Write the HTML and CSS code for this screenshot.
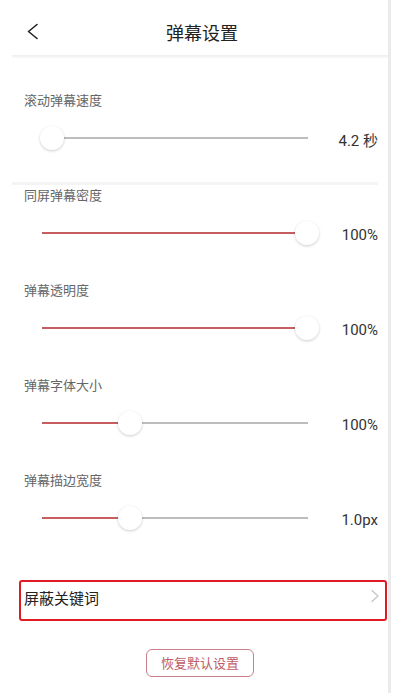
FILE: index.html
```html
<!DOCTYPE html>
<html lang="zh-CN">
<head>
<meta charset="utf-8">
<title>弹幕设置</title>
<link rel="stylesheet" href="styles.css">
</head>
<body>
<div class="app">
  <header class="header">
    <div class="back">
      <svg width="14" height="18" viewBox="0 0 14 18"><path d="M11 1.5 L2.5 8.5 L11 15.5" fill="none" stroke="#222" stroke-width="1.6" stroke-linecap="round" stroke-linejoin="round"/></svg>
    </div>
    <h1 class="title">弹幕设置</h1>
    <div></div>
  </header>
  <div class="header-band"></div>
  <main class="card">
    <section class="setting first">
      <div class="label">滚动弹幕速度</div>
      <div class="row">
        <div class="track"><div class="fill" style="width:10px"></div><div class="thumb" style="left:10px"></div></div>
        <div class="value">4.2 秒</div>
      </div>
      <div class="band"></div>
    </section>
    <section class="setting">
      <div class="label">同屏弹幕密度</div>
      <div class="row">
        <div class="track"><div class="fill" style="width:265px"></div><div class="thumb" style="left:265px"></div></div>
        <div class="value">100%</div>
      </div>
    </section>
    <section class="setting">
      <div class="label">弹幕透明度</div>
      <div class="row">
        <div class="track"><div class="fill" style="width:265px"></div><div class="thumb" style="left:265px"></div></div>
        <div class="value">100%</div>
      </div>
    </section>
    <section class="setting">
      <div class="label">弹幕字体大小</div>
      <div class="row">
        <div class="track"><div class="fill" style="width:88px"></div><div class="thumb" style="left:88px"></div></div>
        <div class="value">100%</div>
      </div>
    </section>
    <section class="setting">
      <div class="label">弹幕描边宽度</div>
      <div class="row">
        <div class="track"><div class="fill" style="width:88px"></div><div class="thumb" style="left:88px"></div></div>
        <div class="value">1.0px</div>
      </div>
    </section>
  </main>
  <div class="keyword">
    <span class="keyword-text">屏蔽关键词</span>
    <svg class="chev" width="10" height="14" viewBox="0 0 10 14"><path d="M2 1.5 L8 7 L2 12.5" fill="none" stroke="#c4c4c4" stroke-width="1.2" stroke-linecap="round" stroke-linejoin="round"/></svg>
  </div>
  <div class="reset-row">
    <button class="reset">恢复默认设置</button>
  </div>
</div>
</body>
</html>
```
FILE: styles.css
```css
html, body {
  margin: 0;
  padding: 0;
  background: #fff;
}
body {
  font-family: Roboto, "Noto Sans CJK SC", sans-serif;
  width: 400px;
  height: 693px;
  overflow: hidden;
}
.app {
  width: 388px;
  height: 693px;
  border-right: 3px solid #ebebeb;
  box-sizing: content-box;
}
.header {
  height: 55px;
  box-sizing: border-box;
  padding-top: 9px;
  display: grid;
  grid-template-columns: 62px 1fr 46px;
  align-items: center;
}
.back {
  padding-left: 26px;
  display: flex;
  align-items: center;
}
.title {
  margin: 0;
  text-align: center;
  font-family: "Noto Sans CJK SC", sans-serif;
  font-size: 18px;
  font-weight: 400;
  color: #222;
  line-height: 24px;
}
.header-band {
  height: 3px;
  margin-left: 12px;
  background: linear-gradient(#efefef, #f9f9f9);
}
.card {
  display: flow-root;
  padding-top: 32px;
}
.setting {
  margin-bottom: 32px;
}
.setting.first {
  margin-bottom: 0;
}
.band {
  height: 3px;
  margin: 29px 0 0 12px;
  width: 366px;
  background: #f4f4f4;
}
.label {
  padding-left: 24px;
  font-family: "Noto Sans CJK SC", sans-serif;
  font-size: 13px;
  line-height: 20px;
  color: #666;
}
.row {
  margin-top: 13px;
  height: 30px;
  display: flex;
  align-items: center;
  padding-left: 42px;
  padding-right: 10px;
}
.track {
  position: relative;
  flex: 0 0 266px;
  height: 2px;
  background: #bdbdbd;
}
.fill {
  height: 2px;
  background: #c65d5f;
}
.thumb {
  position: absolute;
  top: 1px;
  width: 24px;
  height: 24px;
  margin: -12px 0 0 -12px;
  border-radius: 50%;
  background: #fff;
  box-shadow: 0 1px 3px rgba(0, 0, 0, 0.2);
}
.value {
  flex: 1;
  text-align: right;
  font-size: 15px;
  color: #333;
  padding-top: 3px;
  font-family: Roboto, "Noto Sans CJK SC", sans-serif;
}
.keyword {
  margin: 15px 0 0 19px;
  width: 368px;
  height: 41px;
  box-sizing: border-box;
  border: 2px solid #e01b24;
  border-radius: 3px;
  display: flex;
  align-items: center;
  justify-content: space-between;
  padding: 0 5px 7px 3px;
}
.keyword-text {
  font-family: "Noto Sans CJK SC", sans-serif;
  font-size: 15px;
  color: #222;
}
.chev {
  margin-top: -2px;
}
.reset-row {
  margin-top: 28px;
  display: flex;
  justify-content: center;
  width: 400px;
}
.reset {
  width: 108px;
  height: 28px;
  border: 1.5px solid #c98088;
  border-radius: 6px;
  background: #fff;
  color: #c05c66;
  font-family: "Noto Sans CJK SC", sans-serif;
  font-size: 13px;
  padding: 0;
  line-height: 24px;
}
```
